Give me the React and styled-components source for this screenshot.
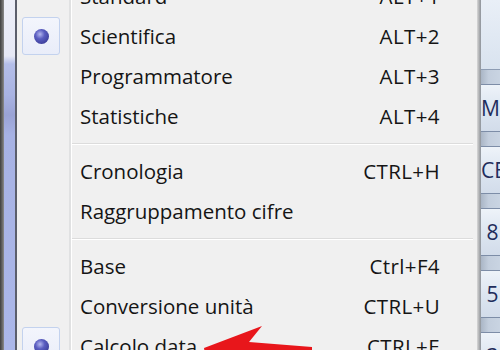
import React from "react";
import styled, { createGlobalStyle } from "styled-components";

const GlobalStyle = createGlobalStyle`
  html, body { margin: 0; padding: 0; }
  body {
    width: 500px;
    height: 350px;
    overflow: hidden;
    background: #f0f0f0;
    font-family: "Open Sans", "Noto Sans", sans-serif;
  }
`;

const Page = styled.div`
  position: relative;
  display: flex;
  width: 500px;
  height: 350px;
  overflow: hidden;
`;

const Frame = styled.div`
  flex: 0 0 17px;
  display: flex;
`;

const FrameEdge = styled.div`
  flex: 0 0 4px;
  background: linear-gradient(to right, #3f3f3f, #6a6a6a 60%, #8c8c8c);
`;

const FrameBar = styled.div`
  flex: 1;
  background: linear-gradient(
    to bottom,
    #eceef8 0,
    #e6e8f5 56px,
    #b4bee9 64px,
    #a9b3e2 95px,
    #9aa3d5 115px,
    #a7b2e4 135px,
    #abb7e9 100%
  );
`;

const FrameLine = styled.div`
  flex: 0 0 2px;
  background: #5b5e6b;
`;

const Menu = styled.div`
  flex: 0 0 460px;
  background: linear-gradient(
    to right,
    #f0f0f0 52px,
    #e0e1e2 52px,
    #e0e1e2 54px,
    #ffffff 54px,
    #ffffff 55px,
    #f0f0f0 55px
  );
`;

const Items = styled.div`
  margin-top: -24px;
  display: flex;
  flex-direction: column;
`;

const Item = styled.div`
  height: 40px;
  display: grid;
  grid-template-columns: 55px 1fr auto;
  align-items: center;
  padding-right: 37px;
  color: #151515;
  font-size: 20.5px;
  line-height: 1;
`;

const IconCell = styled.div`
  height: 40px;
  display: flex;
  align-items: center;
  padding-left: 5px;
`;

const CheckBox = styled.div`
  width: 36px;
  height: 36px;
  border: 1px solid #c3d2ee;
  border-radius: 3px;
  background: linear-gradient(to bottom, #f3f5fc, #e9edf9);
  display: flex;
  align-items: center;
  justify-content: center;
`;

const Bullet = styled.div`
  width: 15px;
  height: 15px;
  border-radius: 50%;
  background: radial-gradient(
    circle at 40% 35%,
    #b3b6ee 0%,
    #5a5dc0 35%,
    #2d2f86 100%
  );
`;

const Label = styled.span`
  padding-left: 8px;
  white-space: nowrap;
`;

const Shortcut = styled.span`
  white-space: nowrap;
  text-align: right;
  letter-spacing: 0.4px;
`;

const Separator = styled.div`
  height: 15px;
  display: flex;
  flex-direction: column;
  justify-content: center;
  padding-left: 55px;
  padding-right: 4px;
  &::before {
    content: "";
    display: block;
    height: 1px;
    background: #dcdcdc;
  }
  &::after {
    content: "";
    display: block;
    height: 1px;
    background: #ffffff;
  }
`;

const Shadow = styled.div`
  flex: 0 0 4px;
  background: linear-gradient(to right, #d8d8d8, #a9abae 60%, #8e949c);
`;

const AppStrip = styled.div`
  flex: 1;
  display: flex;
  flex-direction: column;
  gap: 14px;
  background: linear-gradient(to right, #aab6c6, #c3cedd 40%, #c9d4e2);
  overflow: hidden;
`;

const Display = styled.div`
  flex: 0 0 69px;
  background: linear-gradient(to bottom, #e9eff7, #d9e3ef);
  border-bottom: 1px solid #8d9cb3;
`;

const Key = styled.div`
  flex: 0 0 46px;
  display: flex;
  align-items: center;
  border-top: 1px solid #7d8da7;
  border-bottom: 1px solid #7d8da7;
  background: linear-gradient(to bottom, #eef3f9, #dde6f1 50%, #d2dcea);
  color: #1f2d5c;
  font-family: "Open Sans", "Noto Sans", sans-serif;
  font-size: 21px;
  white-space: nowrap;
`;

const Annotation = styled.svg`
  position: absolute;
  left: 0;
  top: 0;
  width: 500px;
  height: 350px;
  pointer-events: none;
`;

const entries = [
  { label: "Standard", key: "ALT+1" },
  { label: "Scientifica", key: "ALT+2", checked: true },
  { label: "Programmatore", key: "ALT+3" },
  { label: "Statistiche", key: "ALT+4" },
  { sep: true },
  { label: "Cronologia", key: "CTRL+H" },
  { label: "Raggruppamento cifre", key: "" },
  { sep: true },
  { label: "Base", key: "Ctrl+F4" },
  { label: "Conversione unità", key: "CTRL+U" },
  { label: "Calcolo data", key: "CTRL+E", checked: true },
];

export default function App() {
  return (
    <>
      <GlobalStyle />
      <Page>
        <Frame>
          <FrameEdge />
          <FrameBar />
          <FrameLine />
        </Frame>
        <Menu>
          <Items>
            {entries.map((e, i) =>
              e.sep ? (
                <Separator key={i} />
              ) : (
                <Item key={i}>
                  <IconCell>
                    {e.checked && (
                      <CheckBox>
                        <Bullet />
                      </CheckBox>
                    )}
                  </IconCell>
                  <Label>{e.label}</Label>
                  <Shortcut>{e.key}</Shortcut>
                </Item>
              )
            )}
          </Items>
        </Menu>
        <Shadow />
        <AppStrip>
          <Display />
          <Key>MI</Key>
          <Key>CE</Key>
          <Key>&nbsp;8</Key>
          <Key>&nbsp;5</Key>
          <Key>&nbsp;3</Key>
        </AppStrip>
        <Annotation viewBox="0 0 500 350">
          <polygon
            points="204,348 262,326 249,342 312,347 312,360 206,360"
            fill="#e8161b"
          />
        </Annotation>
      </Page>
    </>
  );
}
